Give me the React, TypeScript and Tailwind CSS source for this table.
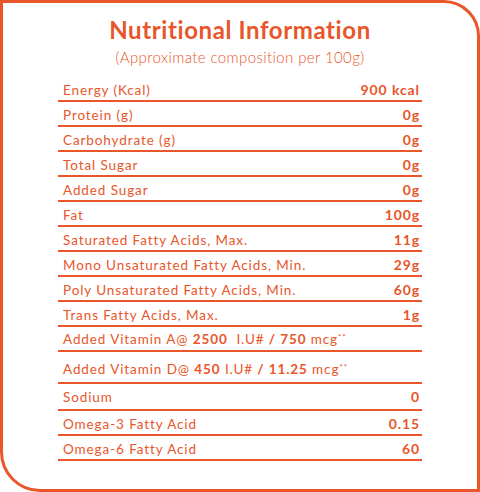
const rows = [
  { label: 'Energy (Kcal)', value: '900 kcal' },
  { label: 'Protein (g)', value: '0g' },
  { label: 'Carbohydrate (g)', value: '0g' },
  { label: 'Total Sugar', value: '0g' },
  { label: 'Added Sugar', value: '0g' },
  { label: 'Fat', value: '100g' },
  { label: 'Saturated Fatty Acids, Max.', value: '11g' },
  { label: 'Mono Unsaturated Fatty Acids, Min.', value: '29g' },
  { label: 'Poly Unsaturated Fatty Acids, Min.', value: '60g' },
  { label: 'Trans Fatty Acids, Max.', value: '1g' },
];

const tail = [
  { label: 'Sodium', value: '0', cls: 'h-[27px] pb-[4px]' },
  { label: 'Omega-3 Fatty Acid', value: '0.15', cls: 'h-[25px] pb-[2px]' },
  { label: 'Omega-6 Fatty Acid', value: '60', cls: 'h-[25px] pb-[2px]' },
];

export default function App() {
  return (
    <div className="w-[480px] h-[492px] bg-white font-['Lato',sans-serif] text-[#e8562a]">
      <div className="h-full border-[3px] border-[#e8562a] rounded-tr-[36px] rounded-bl-[40px] flex flex-col items-center">
        <h1 className="mt-[12px] text-[24px] leading-[30px] font-bold tracking-[0.6px]">Nutritional Information</h1>
        <p className="mt-[3px] text-[15px] leading-[18px] font-light tracking-[0.4px]">(Approximate composition per 100g)</p>

        <div className="mt-[11px] w-[364px] text-[13.5px] leading-[16px] tracking-[0.9px]">
          {rows.map((r) => (
            <div key={r.label} className="h-[25px] flex items-end justify-between pl-[5px] pr-[2px] pb-[2px] border-b-2 border-[#e8562a]">
              <span>{r.label}</span>
              <span className="font-bold text-[14px]">{r.value}</span>
            </div>
          ))}
          <div className="h-[25px] flex items-end pl-[5px] pb-[3px] border-b-2 border-[#e8562a]">
            <span>
              Added Vitamin A@ <b>2500</b>&nbsp; I.U# <b>/ 750</b> mcg<sup className="text-[8px]">**</sup>
            </span>
          </div>
          <div className="h-[32px] flex items-end pl-[5px] pb-[5px] border-b-2 border-[#e8562a]">
            <span>
              Added Vitamin D@ <b>450</b> I.U# <b>/ 11.25</b> mcg<sup className="text-[8px]">**</sup>
            </span>
          </div>
          {tail.map((r) => (
            <div key={r.label} className={`${r.cls} flex items-end justify-between pl-[5px] pr-[2px] border-b-2 border-[#e8562a]`}>
              <span>{r.label}</span>
              <span className="font-bold text-[14px]">{r.value}</span>
            </div>
          ))}
        </div>
      </div>
    </div>
  );
}
